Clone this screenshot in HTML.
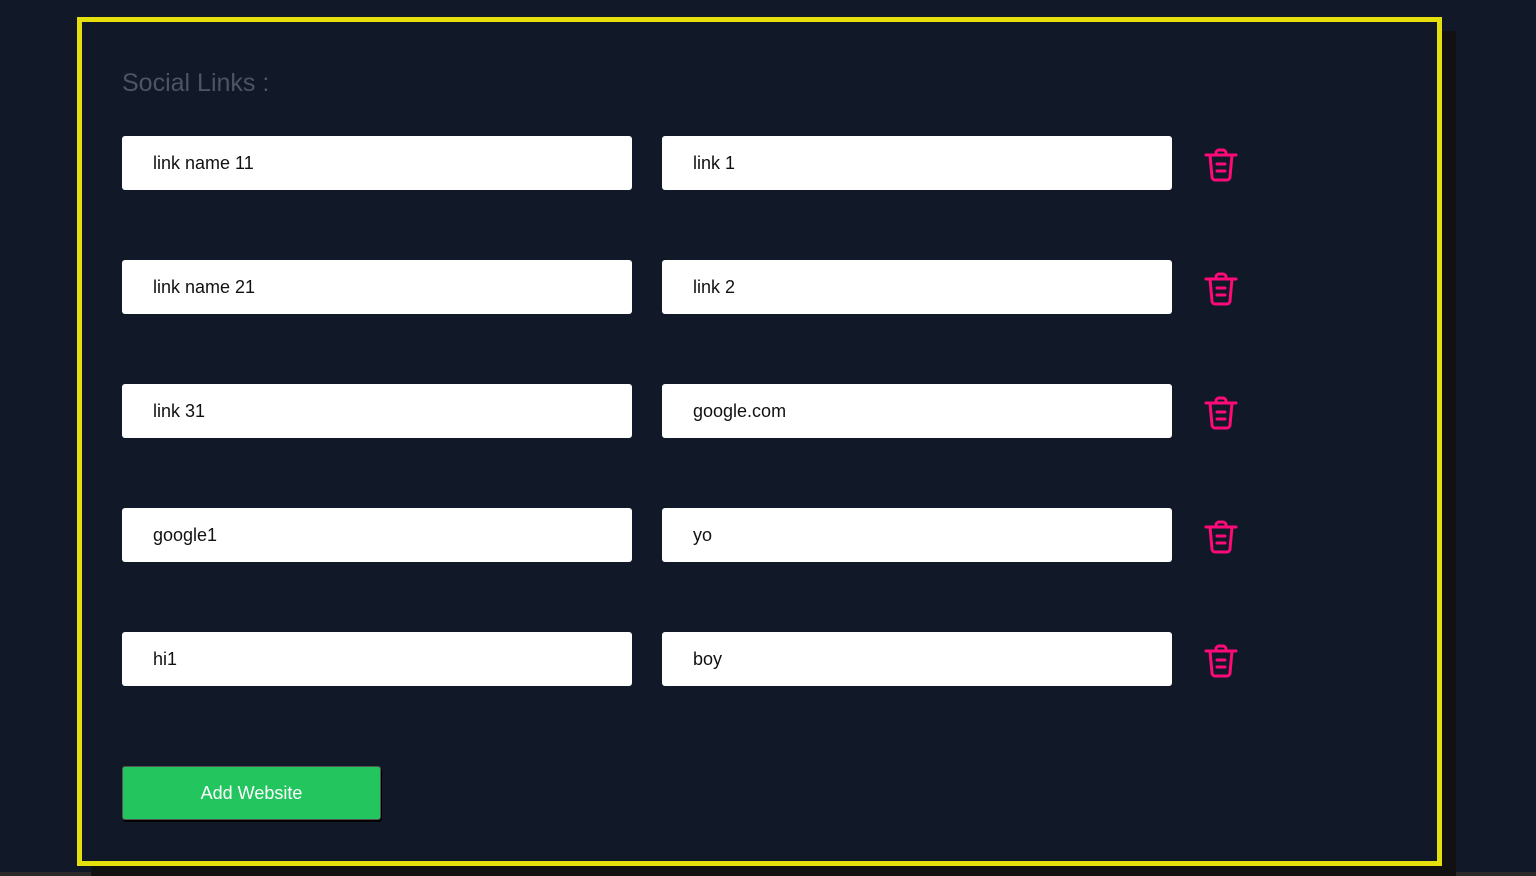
<!DOCTYPE html>
<html><head><style>
html,body{margin:0;padding:0;width:1536px;height:876px;overflow:hidden;background:#111827;font-family:"Liberation Sans",sans-serif}
.box{position:absolute;left:77px;top:17px;width:1355px;height:839px;border:5px solid #e5e00c;box-shadow:14px 14px 0 #111111}
.title{position:absolute;left:122px;top:69px;font-size:25px;color:#4b5563}
.in{position:absolute;width:510px;height:54px;background:#fff;border-radius:3px;box-sizing:border-box;padding-left:31px;line-height:54px;font-size:18px;color:#111}
.tr{position:absolute;left:1203px;width:36px;height:36px}
.btn{position:absolute;left:122px;top:766px;width:259px;height:54px;box-sizing:border-box;background:#22c55e;border:1px solid #555;border-radius:3px;color:#fff;font-size:18px;text-align:center;line-height:52px;box-shadow:1px 2px 0 #000}
.bl{position:absolute;left:0;top:872px;width:1536px;height:4px;background:#2a2a2a}
</style></head><body>
<div class="bl"></div>
<div class="box"></div>
<div class="title">Social Links :</div>

<div class="in" style="left:122px;top:136px">link name 11</div><div class="in" style="left:662px;top:136px">link 1</div>
<div class="in" style="left:122px;top:260px">link name 21</div><div class="in" style="left:662px;top:260px">link 2</div>
<div class="in" style="left:122px;top:384px">link 31</div><div class="in" style="left:662px;top:384px">google.com</div>
<div class="in" style="left:122px;top:508px">google1</div><div class="in" style="left:662px;top:508px">yo</div>
<div class="in" style="left:122px;top:632px">hi1</div><div class="in" style="left:662px;top:632px">boy</div>

<svg class="tr" style="top:147px" viewBox="0 0 36 36"><g fill="none" stroke="#ff0a78" stroke-width="3" stroke-linecap="round" stroke-linejoin="round"><path d="M3 8H33"/><path d="M13 8V6a3 3 0 0 1 3-3h4a3 3 0 0 1 3 3v2"/><path d="M7 8l2 22a3 3 0 0 0 3 3h12a3 3 0 0 0 3-3l2-22"/><path d="M14 17h8M14 24h8"/></g></svg>
<svg class="tr" style="top:271px" viewBox="0 0 36 36"><g fill="none" stroke="#ff0a78" stroke-width="3" stroke-linecap="round" stroke-linejoin="round"><path d="M3 8H33"/><path d="M13 8V6a3 3 0 0 1 3-3h4a3 3 0 0 1 3 3v2"/><path d="M7 8l2 22a3 3 0 0 0 3 3h12a3 3 0 0 0 3-3l2-22"/><path d="M14 17h8M14 24h8"/></g></svg>
<svg class="tr" style="top:395px" viewBox="0 0 36 36"><g fill="none" stroke="#ff0a78" stroke-width="3" stroke-linecap="round" stroke-linejoin="round"><path d="M3 8H33"/><path d="M13 8V6a3 3 0 0 1 3-3h4a3 3 0 0 1 3 3v2"/><path d="M7 8l2 22a3 3 0 0 0 3 3h12a3 3 0 0 0 3-3l2-22"/><path d="M14 17h8M14 24h8"/></g></svg>
<svg class="tr" style="top:519px" viewBox="0 0 36 36"><g fill="none" stroke="#ff0a78" stroke-width="3" stroke-linecap="round" stroke-linejoin="round"><path d="M3 8H33"/><path d="M13 8V6a3 3 0 0 1 3-3h4a3 3 0 0 1 3 3v2"/><path d="M7 8l2 22a3 3 0 0 0 3 3h12a3 3 0 0 0 3-3l2-22"/><path d="M14 17h8M14 24h8"/></g></svg>
<svg class="tr" style="top:643px" viewBox="0 0 36 36"><g fill="none" stroke="#ff0a78" stroke-width="3" stroke-linecap="round" stroke-linejoin="round"><path d="M3 8H33"/><path d="M13 8V6a3 3 0 0 1 3-3h4a3 3 0 0 1 3 3v2"/><path d="M7 8l2 22a3 3 0 0 0 3 3h12a3 3 0 0 0 3-3l2-22"/><path d="M14 17h8M14 24h8"/></g></svg>

<div class="btn">Add Website</div>
</body></html>
